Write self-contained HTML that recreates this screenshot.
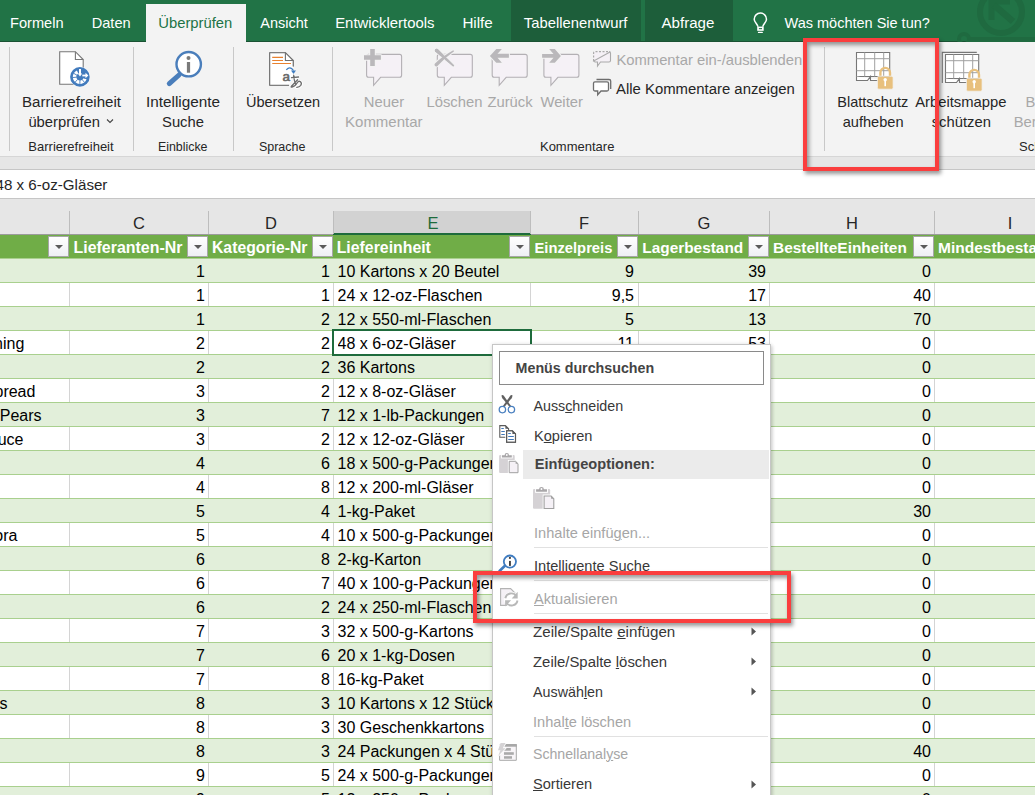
<!DOCTYPE html>
<html><head><meta charset="utf-8"><style>
html,body{margin:0;padding:0;width:1035px;height:795px;overflow:hidden;background:#fff;position:relative}
body{font-family:"Liberation Sans",sans-serif}
.r{position:absolute;box-sizing:border-box}
.t{position:absolute;white-space:nowrap;line-height:1}
u{text-decoration:underline;text-decoration-thickness:1px;text-underline-offset:1px}
.fb{position:absolute;width:21px;height:21px;box-sizing:border-box;border:1px solid #a6a6a6;background:linear-gradient(#fff,#eeeff4)}
.fb:after{content:"";position:absolute;left:6px;top:8px;border-left:4px solid transparent;border-right:4px solid transparent;border-top:4px solid #5a5a5a}
</style></head><body>
<div class="r" style="left:0px;top:0px;width:1035px;height:42px;background:#217346;"></div>
<div class="r" style="left:511px;top:0px;width:130px;height:42px;background:#1d5e3a;"></div>
<div class="r" style="left:645px;top:0px;width:88px;height:42px;background:#1d5e3a;"></div>
<div class="r" style="left:0px;top:41px;width:1035px;height:1px;background:#1a5233;"></div>
<div class="r" style="left:146px;top:4px;width:100px;height:38px;background:#f3f3f3;"></div>
<div class="t" style="left:10px;top:16.00px;font-size:14.6px;color:#fff;font-weight:400;">Formeln</div>
<div class="t" style="left:91.7px;top:16.00px;font-size:14.6px;color:#fff;font-weight:400;">Daten</div>
<div class="t" style="left:158.3px;top:16.00px;font-size:14.8px;color:#217346;font-weight:400;">Überprüfen</div>
<div class="t" style="left:260.3px;top:16.00px;font-size:14.5px;color:#fff;font-weight:400;">Ansicht</div>
<div class="t" style="left:335.2px;top:16.00px;font-size:14.9px;color:#fff;font-weight:400;">Entwicklertools</div>
<div class="t" style="left:462.4px;top:15.00px;font-size:15.2px;color:#fff;font-weight:400;">Hilfe</div>
<div class="t" style="left:523.8px;top:16.00px;font-size:14.8px;color:#fff;font-weight:400;">Tabellenentwurf</div>
<div class="t" style="left:661.5px;top:15.00px;font-size:15.1px;color:#fff;font-weight:400;">Abfrage</div>
<div class="t" style="left:784.5px;top:16.00px;font-size:14.5px;color:#fff;font-weight:400;">Was möchten Sie tun?</div>
<svg class="r" style="left:0;top:0" width="1035" height="42" viewBox="0 0 1035 42"><path d="M757.9 26.8 C757.9 24.2 754.2 22.6 754.2 19.2 A6.15 6.15 0 1 1 766.5 19.2 C766.5 22.6 762.8 24.2 762.8 26.8" fill="none" stroke="#fff" stroke-width="1.5"/><rect x="757.2" y="26.6" width="6.5" height="4.2" fill="#fff"/><rect x="758.9" y="28.1" width="3.1" height="1.1" fill="#217346"/><rect x="757.9" y="31.8" width="5" height="1.3" rx="0.6" fill="#fff"/></svg>
<svg class="r" style="left:940px;top:0px" width="95" height="42" viewBox="0 0 95 42"><circle cx="61" cy="12" r="21" fill="none" stroke="#1f6a40" stroke-width="6"/><path d="M51.5 20 V1.5 H70" fill="none" stroke="#1f6a40" stroke-width="6"/><path d="M54 5 L73 21.5" stroke="#1f6a40" stroke-width="6.5"/><circle cx="24" cy="39" r="5" fill="none" stroke="#1f6a40" stroke-width="4"/><rect x="28" y="37" width="67" height="5" fill="#1f6a40"/></svg>
<div class="r" style="left:0px;top:42px;width:1035px;height:114px;background:#f3f3f3;"></div>
<div class="r" style="left:0px;top:156px;width:1035px;height:1px;background:#d6d6d6;"></div>
<div class="r" style="left:0px;top:157px;width:1035px;height:12px;background:#e6e6e6;"></div>
<div class="r" style="left:9px;top:47px;width:1px;height:104px;background:#c8c8c8;"></div>
<div class="r" style="left:133px;top:47px;width:1px;height:104px;background:#c8c8c8;"></div>
<div class="r" style="left:233px;top:47px;width:1px;height:104px;background:#c8c8c8;"></div>
<div class="r" style="left:332px;top:47px;width:1px;height:104px;background:#c8c8c8;"></div>
<div class="r" style="left:824px;top:47px;width:1px;height:104px;background:#c8c8c8;"></div>
<div class="t" style="left:-228.5px;width:600px;text-align:center;top:94.00px;font-size:15.1px;color:#262626;font-weight:400;">Barrierefreiheit</div>
<div class="t" style="left:28.4px;top:115.00px;font-size:14.8px;color:#262626;font-weight:400;">überprüfen</div>
<svg class="r" style="left:106px;top:118px" width="8" height="6"><path d="M1 1.5 L4 4.5 L7 1.5" fill="none" stroke="#444" stroke-width="1.1"/></svg>
<div class="t" style="left:-229px;width:600px;text-align:center;top:140.00px;font-size:13px;color:#262626;font-weight:400;">Barrierefreiheit</div>
<div class="t" style="left:-117px;width:600px;text-align:center;top:94.00px;font-size:15.3px;color:#262626;font-weight:400;">Intelligente</div>
<div class="t" style="left:-117px;width:600px;text-align:center;top:115.00px;font-size:14.8px;color:#262626;font-weight:400;">Suche</div>
<div class="t" style="left:-117.30000000000001px;width:600px;text-align:center;top:141.00px;font-size:12.4px;color:#262626;font-weight:400;">Einblicke</div>
<div class="t" style="left:-17px;width:600px;text-align:center;top:95.00px;font-size:14.5px;color:#262626;font-weight:400;">Übersetzen</div>
<div class="t" style="left:-17.80000000000001px;width:600px;text-align:center;top:141.00px;font-size:12.5px;color:#262626;font-weight:400;">Sprache</div>
<div class="t" style="left:84px;width:600px;text-align:center;top:95.00px;font-size:14.8px;color:#a8a8a8;font-weight:400;">Neuer</div>
<div class="t" style="left:83.80000000000001px;width:600px;text-align:center;top:114.00px;font-size:15px;color:#a8a8a8;font-weight:400;">Kommentar</div>
<div class="t" style="left:154.5px;width:600px;text-align:center;top:95.00px;font-size:14.8px;color:#a8a8a8;font-weight:400;">Löschen</div>
<div class="t" style="left:210px;width:600px;text-align:center;top:95.00px;font-size:14.8px;color:#a8a8a8;font-weight:400;">Zurück</div>
<div class="t" style="left:261.70000000000005px;width:600px;text-align:center;top:95.00px;font-size:14.8px;color:#a8a8a8;font-weight:400;">Weiter</div>
<div class="t" style="left:277.20000000000005px;width:600px;text-align:center;top:140.00px;font-size:13px;color:#262626;font-weight:400;">Kommentare</div>
<div class="t" style="left:616.4px;top:53.00px;font-size:14.8px;color:#a8a8a8;font-weight:400;">Kommentar ein-/ausblenden</div>
<div class="t" style="left:616px;top:82.00px;font-size:14.9px;color:#262626;font-weight:400;">Alle Kommentare anzeigen</div>
<div class="t" style="left:572.8px;width:600px;text-align:center;top:95.00px;font-size:14.5px;color:#262626;font-weight:400;">Blattschutz</div>
<div class="t" style="left:573.1px;width:600px;text-align:center;top:115.00px;font-size:14.6px;color:#262626;font-weight:400;">aufheben</div>
<div class="t" style="left:660.8px;width:600px;text-align:center;top:95.00px;font-size:14.8px;color:#262626;font-weight:400;">Arbeitsmappe</div>
<div class="t" style="left:661.3px;width:600px;text-align:center;top:115.00px;font-size:14.8px;color:#262626;font-weight:400;">schützen</div>
<div class="t" style="left:1025.6px;top:95.00px;font-size:14.8px;color:#a8a8a8;font-weight:400;">Be</div>
<div class="t" style="left:1013.7px;top:115.00px;font-size:14.8px;color:#a8a8a8;font-weight:400;">Ber</div>
<div class="t" style="left:1019px;top:140.00px;font-size:13px;color:#262626;font-weight:400;">Sch</div>
<svg class="r" style="left:0;top:0" width="1035" height="200" viewBox="0 0 1035 200">
<g>
<path d="M59.7 51.7 H75.4 L83.2 59.5 V84.2 H59.7 Z" fill="#fff" stroke="#777" stroke-width="1.1"/>
<path d="M75.4 51.7 V59.5 H83.2" fill="none" stroke="#777" stroke-width="1.1"/>
<circle cx="79.9" cy="76.9" r="10.1" fill="#fff"/>
<circle cx="79.9" cy="76.9" r="9.8" fill="#427bbd"/>
<path d="M77.6 72.0 A5.4 5.4 0 1 0 85.0 78.75" fill="none" stroke="#fff" stroke-width="3.4"/>
<path d="M77.04 75.25 L73.40 73.15 M76.61 77.19 L72.43 77.55 M77.69 79.35 L74.88 82.47 M79.90 80.20 L79.90 84.40 M82.02 79.43 L84.72 82.65 M83.13 77.59 L87.24 78.46 " stroke="#427bbd" stroke-width="0.9"/>
<rect x="79" y="69" width="2" height="5.2" fill="#fff"/>
<path d="M77.8 73.6 H82.2 L80 76.4 Z" fill="#fff"/>
<rect x="82.3" y="74.6" width="3.8" height="1.8" fill="#fff"/>
<path d="M85.5 72.8 L88.4 75.5 L85.5 78.2 Z" fill="#fff"/>
</g>
<g>
<circle cx="188.7" cy="64.2" r="12.2" fill="#fff" stroke="#4a7ebb" stroke-width="2.4"/>
<path d="M179 75 L169.3 83.7" stroke="#4a7ebb" stroke-width="5" stroke-linecap="round"/>
<circle cx="188.5" cy="58" r="2" fill="#7a7a7a"/>
<rect x="186.9" y="62" width="3.2" height="10.7" fill="#7a7a7a"/>
</g>
<g>
<path d="M269.7 52.7 H285.4 L293.2 60.5 V66.5 M289 85.2 H269.7 V52.7" fill="#fff" stroke="#707070" stroke-width="1.1"/>
<path d="M269.7 52.7 H285.4 L293.2 60.5 V75 L289 85.2 H269.7 Z" fill="#fff"/>
<path d="M269.7 85.2 V52.7 H285.4 L293.2 60.5 V66.5 M289 85.2 H269.7" fill="none" stroke="#707070" stroke-width="1.1"/>
<path d="M285.4 52.7 V60.5 H293.2" fill="none" stroke="#707070" stroke-width="1.1"/>
<path d="M272.2 57.4 H283 M272.2 60.5 H283 M272.2 63.5 H291" stroke="#e8812f" stroke-width="1.1"/>
<path d="M286.3 69.8 Q290 65.5 293.5 70.5" fill="none" stroke="#3f7cc0" stroke-width="1.3"/>
<path d="M291 70.5 L293.5 74 L296 70.5 Z" fill="#3f7cc0"/>
<text x="282.6" y="81" font-family="Liberation Sans" font-size="13.5" fill="#6d6d6d" stroke="#fff" stroke-width="2" paint-order="stroke">a</text><text x="282.6" y="81" font-family="Liberation Sans" font-size="13.5" fill="#6d6d6d" stroke="#6d6d6d" stroke-width="0.5">a</text>
<g fill="none" stroke-linecap="round"><path d="M291.5 77.6 L298.6 77.0 M293.7 75.2 Q294.0 80.5 295.6 84.5 M297.6 79.7 Q293.5 84 291.6 86 Q290.4 87.3 292.0 87.0 Q295.5 86.2 297.4 82.5 Q298.6 80.6 300.2 81.6 Q302.2 83.2 300.8 85.4 Q299.4 87 296.8 87.4" stroke="#fff" stroke-width="3"/><path d="M291.5 77.6 L298.6 77.0 M293.7 75.2 Q294.0 80.5 295.6 84.5 M297.6 79.7 Q293.5 84 291.6 86 Q290.4 87.3 292.0 87.0 Q295.5 86.2 297.4 82.5 Q298.6 80.6 300.2 81.6 Q302.2 83.2 300.8 85.4 Q299.4 87 296.8 87.4" stroke="#6d6d6d" stroke-width="1.3"/></g>
</g>
</svg>
<svg class="r" style="left:0;top:0" width="1035" height="200" viewBox="0 0 1035 200"><path d="M368.6 54.4 H399.6 Q401.6 54.4 401.6 56.4 V75.3 Q401.6 77.3 399.6 77.3 H380.6 L373.6 85.3 V77.3 H368.6 Q366.6 77.3 366.6 75.3 V56.4 Q366.6 54.4 368.6 54.4 Z" fill="#f5f1f6" stroke="#b3b0b4" stroke-width="1.1"/><path d="M370.2 49.1 H374.8 V55.3 H380.9 V59.7 H374.8 V65.9 H370.2 V59.7 H364 V55.3 H370.2 Z" fill="#bab8bb" stroke="#f3f3f3" stroke-width="2" paint-order="stroke" stroke-linejoin="round"/><path d="M439.3 54.4 H470.3 Q472.3 54.4 472.3 56.4 V75.3 Q472.3 77.3 470.3 77.3 H451.3 L444.3 85.3 V77.3 H439.3 Q437.3 77.3 437.3 75.3 V56.4 Q437.3 54.4 439.3 54.4 Z" fill="#f5f1f6" stroke="#b3b0b4" stroke-width="1.1"/><path d="M437.6 49.0 L454.2 65.4 L453.2 66.4 L435.2 51.6 A1.8 1.8 0 0 1 437.6 49.0 Z" fill="#bab8bb" stroke="#f3f3f3" stroke-width="2" paint-order="stroke" stroke-linejoin="round"/><path d="M435.0 63.4 Q442 56.5 453.3 50.2 L454.1 51.2 Q445 57.5 437.2 66.2 A1.8 1.8 0 0 1 435.0 63.4 Z" fill="#bab8bb" stroke="#f3f3f3" stroke-width="2" paint-order="stroke" stroke-linejoin="round"/><path d="M437.6 49.0 L454.2 65.4 L453.2 66.4 L435.2 51.6 A1.8 1.8 0 0 1 437.6 49.0 Z" fill="#bab8bb"/><path d="M494.2 54.4 H525.2 Q527.2 54.4 527.2 56.4 V75.3 Q527.2 77.3 525.2 77.3 H506.2 L499.2 85.3 V77.3 H494.2 Q492.2 77.3 492.2 75.3 V56.4 Q492.2 54.4 494.2 54.4 Z" fill="#f5f1f6" stroke="#b3b0b4" stroke-width="1.1"/><path d="M489.9 56 L496.3 49.1 H501.9 L497.5 53.7 H508.9 V57.8 H497.5 L501.9 62.8 H496.3 Z" fill="#bab8bb" stroke="#f3f3f3" stroke-width="2" paint-order="stroke" stroke-linejoin="round"/><path d="M545.9 54.4 H576.9 Q578.9 54.4 578.9 56.4 V75.3 Q578.9 77.3 576.9 77.3 H557.9 L550.9 85.3 V77.3 H545.9 Q543.9 77.3 543.9 75.3 V56.4 Q543.9 54.4 545.9 54.4 Z" fill="#f5f1f6" stroke="#b3b0b4" stroke-width="1.1"/><path d="M542.1 54 H553.5 L549.2 49.1 H554.8 L560.9 55.9 L554.8 62.8 H549.2 L553.5 57.8 H542.1 Z" fill="#bab8bb" stroke="#f3f3f3" stroke-width="2" paint-order="stroke" stroke-linejoin="round"/>
<path d="M595 51.6 H609 Q610.5 51.6 610.5 53 V60.5 Q610.5 62 609 62 H600.5 L597.5 66 V62 H595 Q593.6 62 593.6 60.5 V53 Q593.6 51.6 595 51.6 Z" fill="#f5f1f6"/>
<path d="M593.6 61 V53 Q593.6 51.6 595 51.6 H609" fill="none" stroke="#aaa" stroke-width="1.2" stroke-dasharray="2 1.5"/>
<path d="M609 51.6 Q610.5 51.6 610.5 53 V60.5 Q610.5 62 609 62 H600.5 L597.5 66 V62 H595 L593.6 61 L610 52" fill="none" stroke="#aaa" stroke-width="1.1"/>
<path d="M596.5 79.5 H609 Q610.7 79.5 610.7 81 V89" fill="none" stroke="#6d6d6d" stroke-width="1.3"/>
<path d="M595 81.8 H607 Q608.5 81.8 608.5 83.3 V89.5 Q608.5 91 607 91 H601 L597.7 94.8 V91 H595 Q593.5 91 593.5 89.5 V83.3 Q593.5 81.8 595 81.8 Z" fill="#fff" stroke="#6d6d6d" stroke-width="1.3"/>
</svg>
<svg class="r" style="left:0;top:0" width="1035" height="200" viewBox="0 0 1035 200"><path d="M856.5 52.5 H889.7 V76.5 H856.5 Z" fill="#fff" stroke="#777" stroke-width="1.1"/><path d="M856.5 76.5 V80.5 H867.5 L870.5 76.5 L870.5 80.5 H886.7 " fill="#fff" stroke="#777" stroke-width="1.1"/><path d="M856.5 58.7 H889.7 M856.5 70.7 H889.7 M864.7 52.5 V76.5 M874.7 52.5 V76.5 M883.7 52.5 V76.5" stroke="#a0a0a0" stroke-width="1"/><path d="M880.4 76.2 V72.7 A4.8 4.8 0 0 1 890.0 72.7 V76.2" fill="none" stroke="#e8c07d" stroke-width="2.4"/><rect x="877.4" y="76.2" width="15.7" height="13" rx="1.5" fill="#e8c07d" stroke="#f3f3f3" stroke-width="0.8"/><circle cx="885.1999999999999" cy="79.8" r="1.7" fill="#fff"/><rect x="884.4" y="80.2" width="1.6" height="6" fill="#fff"/><path d="M942.3 82.9 V52.4 H976.8" fill="none" stroke="#777" stroke-width="1.1"/><path d="M945.5 54.5 H978.7 V78.5 H945.5 Z" fill="#fff" stroke="#777" stroke-width="1.1"/><path d="M945.5 78.5 V82.5 H956.5 L959.5 78.5 L959.5 82.5 H975.7 " fill="#fff" stroke="#777" stroke-width="1.1"/><path d="M945.5 60.7 H978.7 M945.5 72.7 H978.7 M953.7 54.5 V78.5 M963.7 54.5 V78.5 M972.7 54.5 V78.5" stroke="#a0a0a0" stroke-width="1"/><path d="M969.4 78.2 V74.7 A4.8 4.8 0 0 1 979.0 74.7 V78.2" fill="none" stroke="#e8c07d" stroke-width="2.4"/><rect x="966.4" y="78.2" width="15.7" height="13" rx="1.5" fill="#e8c07d" stroke="#f3f3f3" stroke-width="0.8"/><circle cx="974.1999999999999" cy="81.8" r="1.7" fill="#fff"/><rect x="973.4" y="82.2" width="1.6" height="6" fill="#fff"/></svg>
<div class="r" style="left:0px;top:169px;width:1035px;height:1px;background:#c6c6c6;"></div>
<div class="r" style="left:0px;top:170px;width:1035px;height:28px;background:#ffffff;"></div>
<div class="r" style="left:0px;top:198px;width:1035px;height:1px;background:#c6c6c6;"></div>
<div class="t" style="left:-4.5px;top:177.00px;font-size:15.15px;color:#262626;font-weight:400;">48 x 6-oz-Gläser</div>
<div class="r" style="left:0px;top:199px;width:1035px;height:36px;background:#e6e6e6;"></div>
<div class="r" style="left:333px;top:211px;width:197px;height:23px;background:#d2d2d2;"></div>
<div class="r" style="left:0px;top:234px;width:1035px;height:1px;background:#9b9b9b;"></div>
<div class="r" style="left:333px;top:233px;width:198px;height:2px;background:#1e6b3c;"></div>
<div class="r" style="left:69px;top:211px;width:1px;height:23px;background:#bdbdbd;"></div>
<div class="r" style="left:208px;top:211px;width:1px;height:23px;background:#bdbdbd;"></div>
<div class="r" style="left:333px;top:211px;width:1px;height:23px;background:#bdbdbd;"></div>
<div class="r" style="left:530px;top:211px;width:1px;height:23px;background:#bdbdbd;"></div>
<div class="r" style="left:638px;top:211px;width:1px;height:23px;background:#bdbdbd;"></div>
<div class="r" style="left:769px;top:211px;width:1px;height:23px;background:#bdbdbd;"></div>
<div class="r" style="left:934px;top:211px;width:1px;height:23px;background:#bdbdbd;"></div>
<div class="t" style="left:-161px;width:600px;text-align:center;top:215.00px;font-size:16.5px;color:#262626;font-weight:400;">C</div>
<div class="t" style="left:-29px;width:600px;text-align:center;top:215.00px;font-size:16.5px;color:#262626;font-weight:400;">D</div>
<div class="t" style="left:133px;width:600px;text-align:center;top:215.00px;font-size:16.5px;color:#1e6b3c;font-weight:400;">E</div>
<div class="t" style="left:284px;width:600px;text-align:center;top:215.00px;font-size:16.5px;color:#262626;font-weight:400;">F</div>
<div class="t" style="left:404px;width:600px;text-align:center;top:215.00px;font-size:16.5px;color:#262626;font-weight:400;">G</div>
<div class="t" style="left:552px;width:600px;text-align:center;top:215.00px;font-size:16.5px;color:#262626;font-weight:400;">H</div>
<div class="t" style="left:710px;width:600px;text-align:center;top:215.00px;font-size:16.5px;color:#262626;font-weight:400;">I</div>
<div class="r" style="left:0px;top:235px;width:1035px;height:23px;background:#70ad47;"></div>
<div class="t" style="left:73.5px;top:240.00px;font-size:15.95px;color:#fff;font-weight:700;">Lieferanten-Nr</div>
<div class="t" style="left:212px;top:240.00px;font-size:15.75px;color:#fff;font-weight:700;">Kategorie-Nr</div>
<div class="t" style="left:336.7px;top:240.00px;font-size:15.85px;color:#fff;font-weight:700;">Liefereinheit</div>
<div class="t" style="left:534.5px;top:241.00px;font-size:14.75px;color:#fff;font-weight:700;">Einzelpreis</div>
<div class="t" style="left:642.3px;top:240.00px;font-size:15.4px;color:#fff;font-weight:700;">Lagerbestand</div>
<div class="t" style="left:773px;top:240.00px;font-size:15.45px;color:#fff;font-weight:700;">BestellteEinheiten</div>
<div class="t" style="left:938px;top:240.00px;font-size:15.5px;color:#fff;font-weight:700;">Mindestbestand</div>
<div class="fb" style="left:48px;top:236px"></div>
<div class="fb" style="left:187px;top:236px"></div>
<div class="fb" style="left:312px;top:236px"></div>
<div class="fb" style="left:509px;top:236px"></div>
<div class="fb" style="left:617px;top:236px"></div>
<div class="fb" style="left:748px;top:236px"></div>
<div class="fb" style="left:913px;top:236px"></div>
<div class="r" style="left:0px;top:258px;width:1035px;height:24px;background:#e2efda;"></div>
<div class="r" style="left:0px;top:282px;width:1035px;height:24px;background:#ffffff;"></div>
<div class="r" style="left:69px;top:282px;width:1px;height:24px;background:#d4d4d4;"></div>
<div class="r" style="left:208px;top:282px;width:1px;height:24px;background:#d4d4d4;"></div>
<div class="r" style="left:333px;top:282px;width:1px;height:24px;background:#d4d4d4;"></div>
<div class="r" style="left:530px;top:282px;width:1px;height:24px;background:#d4d4d4;"></div>
<div class="r" style="left:638px;top:282px;width:1px;height:24px;background:#d4d4d4;"></div>
<div class="r" style="left:769px;top:282px;width:1px;height:24px;background:#d4d4d4;"></div>
<div class="r" style="left:934px;top:282px;width:1px;height:24px;background:#d4d4d4;"></div>
<div class="r" style="left:0px;top:306px;width:1035px;height:24px;background:#e2efda;"></div>
<div class="r" style="left:0px;top:330px;width:1035px;height:24px;background:#ffffff;"></div>
<div class="r" style="left:69px;top:330px;width:1px;height:24px;background:#d4d4d4;"></div>
<div class="r" style="left:208px;top:330px;width:1px;height:24px;background:#d4d4d4;"></div>
<div class="r" style="left:333px;top:330px;width:1px;height:24px;background:#d4d4d4;"></div>
<div class="r" style="left:530px;top:330px;width:1px;height:24px;background:#d4d4d4;"></div>
<div class="r" style="left:638px;top:330px;width:1px;height:24px;background:#d4d4d4;"></div>
<div class="r" style="left:769px;top:330px;width:1px;height:24px;background:#d4d4d4;"></div>
<div class="r" style="left:934px;top:330px;width:1px;height:24px;background:#d4d4d4;"></div>
<div class="r" style="left:0px;top:354px;width:1035px;height:24px;background:#e2efda;"></div>
<div class="r" style="left:0px;top:378px;width:1035px;height:24px;background:#ffffff;"></div>
<div class="r" style="left:69px;top:378px;width:1px;height:24px;background:#d4d4d4;"></div>
<div class="r" style="left:208px;top:378px;width:1px;height:24px;background:#d4d4d4;"></div>
<div class="r" style="left:333px;top:378px;width:1px;height:24px;background:#d4d4d4;"></div>
<div class="r" style="left:530px;top:378px;width:1px;height:24px;background:#d4d4d4;"></div>
<div class="r" style="left:638px;top:378px;width:1px;height:24px;background:#d4d4d4;"></div>
<div class="r" style="left:769px;top:378px;width:1px;height:24px;background:#d4d4d4;"></div>
<div class="r" style="left:934px;top:378px;width:1px;height:24px;background:#d4d4d4;"></div>
<div class="r" style="left:0px;top:402px;width:1035px;height:24px;background:#e2efda;"></div>
<div class="r" style="left:0px;top:426px;width:1035px;height:24px;background:#ffffff;"></div>
<div class="r" style="left:69px;top:426px;width:1px;height:24px;background:#d4d4d4;"></div>
<div class="r" style="left:208px;top:426px;width:1px;height:24px;background:#d4d4d4;"></div>
<div class="r" style="left:333px;top:426px;width:1px;height:24px;background:#d4d4d4;"></div>
<div class="r" style="left:530px;top:426px;width:1px;height:24px;background:#d4d4d4;"></div>
<div class="r" style="left:638px;top:426px;width:1px;height:24px;background:#d4d4d4;"></div>
<div class="r" style="left:769px;top:426px;width:1px;height:24px;background:#d4d4d4;"></div>
<div class="r" style="left:934px;top:426px;width:1px;height:24px;background:#d4d4d4;"></div>
<div class="r" style="left:0px;top:450px;width:1035px;height:24px;background:#e2efda;"></div>
<div class="r" style="left:0px;top:474px;width:1035px;height:24px;background:#ffffff;"></div>
<div class="r" style="left:69px;top:474px;width:1px;height:24px;background:#d4d4d4;"></div>
<div class="r" style="left:208px;top:474px;width:1px;height:24px;background:#d4d4d4;"></div>
<div class="r" style="left:333px;top:474px;width:1px;height:24px;background:#d4d4d4;"></div>
<div class="r" style="left:530px;top:474px;width:1px;height:24px;background:#d4d4d4;"></div>
<div class="r" style="left:638px;top:474px;width:1px;height:24px;background:#d4d4d4;"></div>
<div class="r" style="left:769px;top:474px;width:1px;height:24px;background:#d4d4d4;"></div>
<div class="r" style="left:934px;top:474px;width:1px;height:24px;background:#d4d4d4;"></div>
<div class="r" style="left:0px;top:498px;width:1035px;height:24px;background:#e2efda;"></div>
<div class="r" style="left:0px;top:522px;width:1035px;height:24px;background:#ffffff;"></div>
<div class="r" style="left:69px;top:522px;width:1px;height:24px;background:#d4d4d4;"></div>
<div class="r" style="left:208px;top:522px;width:1px;height:24px;background:#d4d4d4;"></div>
<div class="r" style="left:333px;top:522px;width:1px;height:24px;background:#d4d4d4;"></div>
<div class="r" style="left:530px;top:522px;width:1px;height:24px;background:#d4d4d4;"></div>
<div class="r" style="left:638px;top:522px;width:1px;height:24px;background:#d4d4d4;"></div>
<div class="r" style="left:769px;top:522px;width:1px;height:24px;background:#d4d4d4;"></div>
<div class="r" style="left:934px;top:522px;width:1px;height:24px;background:#d4d4d4;"></div>
<div class="r" style="left:0px;top:546px;width:1035px;height:24px;background:#e2efda;"></div>
<div class="r" style="left:0px;top:570px;width:1035px;height:24px;background:#ffffff;"></div>
<div class="r" style="left:69px;top:570px;width:1px;height:24px;background:#d4d4d4;"></div>
<div class="r" style="left:208px;top:570px;width:1px;height:24px;background:#d4d4d4;"></div>
<div class="r" style="left:333px;top:570px;width:1px;height:24px;background:#d4d4d4;"></div>
<div class="r" style="left:530px;top:570px;width:1px;height:24px;background:#d4d4d4;"></div>
<div class="r" style="left:638px;top:570px;width:1px;height:24px;background:#d4d4d4;"></div>
<div class="r" style="left:769px;top:570px;width:1px;height:24px;background:#d4d4d4;"></div>
<div class="r" style="left:934px;top:570px;width:1px;height:24px;background:#d4d4d4;"></div>
<div class="r" style="left:0px;top:594px;width:1035px;height:24px;background:#e2efda;"></div>
<div class="r" style="left:0px;top:618px;width:1035px;height:24px;background:#ffffff;"></div>
<div class="r" style="left:69px;top:618px;width:1px;height:24px;background:#d4d4d4;"></div>
<div class="r" style="left:208px;top:618px;width:1px;height:24px;background:#d4d4d4;"></div>
<div class="r" style="left:333px;top:618px;width:1px;height:24px;background:#d4d4d4;"></div>
<div class="r" style="left:530px;top:618px;width:1px;height:24px;background:#d4d4d4;"></div>
<div class="r" style="left:638px;top:618px;width:1px;height:24px;background:#d4d4d4;"></div>
<div class="r" style="left:769px;top:618px;width:1px;height:24px;background:#d4d4d4;"></div>
<div class="r" style="left:934px;top:618px;width:1px;height:24px;background:#d4d4d4;"></div>
<div class="r" style="left:0px;top:642px;width:1035px;height:24px;background:#e2efda;"></div>
<div class="r" style="left:0px;top:666px;width:1035px;height:24px;background:#ffffff;"></div>
<div class="r" style="left:69px;top:666px;width:1px;height:24px;background:#d4d4d4;"></div>
<div class="r" style="left:208px;top:666px;width:1px;height:24px;background:#d4d4d4;"></div>
<div class="r" style="left:333px;top:666px;width:1px;height:24px;background:#d4d4d4;"></div>
<div class="r" style="left:530px;top:666px;width:1px;height:24px;background:#d4d4d4;"></div>
<div class="r" style="left:638px;top:666px;width:1px;height:24px;background:#d4d4d4;"></div>
<div class="r" style="left:769px;top:666px;width:1px;height:24px;background:#d4d4d4;"></div>
<div class="r" style="left:934px;top:666px;width:1px;height:24px;background:#d4d4d4;"></div>
<div class="r" style="left:0px;top:690px;width:1035px;height:24px;background:#e2efda;"></div>
<div class="r" style="left:0px;top:714px;width:1035px;height:24px;background:#ffffff;"></div>
<div class="r" style="left:69px;top:714px;width:1px;height:24px;background:#d4d4d4;"></div>
<div class="r" style="left:208px;top:714px;width:1px;height:24px;background:#d4d4d4;"></div>
<div class="r" style="left:333px;top:714px;width:1px;height:24px;background:#d4d4d4;"></div>
<div class="r" style="left:530px;top:714px;width:1px;height:24px;background:#d4d4d4;"></div>
<div class="r" style="left:638px;top:714px;width:1px;height:24px;background:#d4d4d4;"></div>
<div class="r" style="left:769px;top:714px;width:1px;height:24px;background:#d4d4d4;"></div>
<div class="r" style="left:934px;top:714px;width:1px;height:24px;background:#d4d4d4;"></div>
<div class="r" style="left:0px;top:738px;width:1035px;height:24px;background:#e2efda;"></div>
<div class="r" style="left:0px;top:762px;width:1035px;height:24px;background:#ffffff;"></div>
<div class="r" style="left:69px;top:762px;width:1px;height:24px;background:#d4d4d4;"></div>
<div class="r" style="left:208px;top:762px;width:1px;height:24px;background:#d4d4d4;"></div>
<div class="r" style="left:333px;top:762px;width:1px;height:24px;background:#d4d4d4;"></div>
<div class="r" style="left:530px;top:762px;width:1px;height:24px;background:#d4d4d4;"></div>
<div class="r" style="left:638px;top:762px;width:1px;height:24px;background:#d4d4d4;"></div>
<div class="r" style="left:769px;top:762px;width:1px;height:24px;background:#d4d4d4;"></div>
<div class="r" style="left:934px;top:762px;width:1px;height:24px;background:#d4d4d4;"></div>
<div class="r" style="left:0px;top:786px;width:1035px;height:24px;background:#e2efda;"></div>
<div class="r" style="left:0px;top:258px;width:1035px;height:1px;background:#a9d08e;"></div>
<div class="r" style="left:0px;top:282px;width:1035px;height:1px;background:#a9d08e;"></div>
<div class="r" style="left:0px;top:306px;width:1035px;height:1px;background:#a9d08e;"></div>
<div class="r" style="left:0px;top:330px;width:1035px;height:1px;background:#a9d08e;"></div>
<div class="r" style="left:0px;top:354px;width:1035px;height:1px;background:#a9d08e;"></div>
<div class="r" style="left:0px;top:378px;width:1035px;height:1px;background:#a9d08e;"></div>
<div class="r" style="left:0px;top:402px;width:1035px;height:1px;background:#a9d08e;"></div>
<div class="r" style="left:0px;top:426px;width:1035px;height:1px;background:#a9d08e;"></div>
<div class="r" style="left:0px;top:450px;width:1035px;height:1px;background:#a9d08e;"></div>
<div class="r" style="left:0px;top:474px;width:1035px;height:1px;background:#a9d08e;"></div>
<div class="r" style="left:0px;top:498px;width:1035px;height:1px;background:#a9d08e;"></div>
<div class="r" style="left:0px;top:522px;width:1035px;height:1px;background:#a9d08e;"></div>
<div class="r" style="left:0px;top:546px;width:1035px;height:1px;background:#a9d08e;"></div>
<div class="r" style="left:0px;top:570px;width:1035px;height:1px;background:#a9d08e;"></div>
<div class="r" style="left:0px;top:594px;width:1035px;height:1px;background:#a9d08e;"></div>
<div class="r" style="left:0px;top:618px;width:1035px;height:1px;background:#a9d08e;"></div>
<div class="r" style="left:0px;top:642px;width:1035px;height:1px;background:#a9d08e;"></div>
<div class="r" style="left:0px;top:666px;width:1035px;height:1px;background:#a9d08e;"></div>
<div class="r" style="left:0px;top:690px;width:1035px;height:1px;background:#a9d08e;"></div>
<div class="r" style="left:0px;top:714px;width:1035px;height:1px;background:#a9d08e;"></div>
<div class="r" style="left:0px;top:738px;width:1035px;height:1px;background:#a9d08e;"></div>
<div class="r" style="left:0px;top:762px;width:1035px;height:1px;background:#a9d08e;"></div>
<div class="r" style="left:0px;top:786px;width:1035px;height:1px;background:#a9d08e;"></div>
<div class="r" style="left:0px;top:810px;width:1035px;height:1px;background:#a9d08e;"></div>
<div class="t" style="right:830px;top:264.00px;font-size:16px;color:#000;font-weight:400;">1</div>
<div class="t" style="right:705px;top:264.00px;font-size:16px;color:#000;font-weight:400;">1</div>
<div class="t" style="left:337.5px;top:264px;font-size:16px;color:#000;width:192px;overflow:hidden">10 Kartons x 20 Beutel</div>
<div class="t" style="right:401px;top:264.00px;font-size:16px;color:#000;font-weight:400;">9</div>
<div class="t" style="right:269px;top:264.00px;font-size:16px;color:#000;font-weight:400;">39</div>
<div class="t" style="right:104px;top:264.00px;font-size:16px;color:#000;font-weight:400;">0</div>
<div class="t" style="right:830px;top:288.00px;font-size:16px;color:#000;font-weight:400;">1</div>
<div class="t" style="right:705px;top:288.00px;font-size:16px;color:#000;font-weight:400;">1</div>
<div class="t" style="left:337.5px;top:288px;font-size:16px;color:#000;width:192px;overflow:hidden">24 x 12-oz-Flaschen</div>
<div class="t" style="right:401px;top:288.00px;font-size:16px;color:#000;font-weight:400;">9,5</div>
<div class="t" style="right:269px;top:288.00px;font-size:16px;color:#000;font-weight:400;">17</div>
<div class="t" style="right:104px;top:288.00px;font-size:16px;color:#000;font-weight:400;">40</div>
<div class="t" style="right:830px;top:312.00px;font-size:16px;color:#000;font-weight:400;">1</div>
<div class="t" style="right:705px;top:312.00px;font-size:16px;color:#000;font-weight:400;">2</div>
<div class="t" style="left:337.5px;top:312px;font-size:16px;color:#000;width:192px;overflow:hidden">12 x 550-ml-Flaschen</div>
<div class="t" style="right:401px;top:312.00px;font-size:16px;color:#000;font-weight:400;">5</div>
<div class="t" style="right:269px;top:312.00px;font-size:16px;color:#000;font-weight:400;">13</div>
<div class="t" style="right:104px;top:312.00px;font-size:16px;color:#000;font-weight:400;">70</div>
<div class="t" style="right:1010.7px;top:336.00px;font-size:16px;color:#000;font-weight:400;">ning</div>
<div class="t" style="right:830px;top:336.00px;font-size:16px;color:#000;font-weight:400;">2</div>
<div class="t" style="right:705px;top:336.00px;font-size:16px;color:#000;font-weight:400;">2</div>
<div class="t" style="left:337.5px;top:336px;font-size:16px;color:#000;width:192px;overflow:hidden">48 x 6-oz-Gläser</div>
<div class="t" style="right:401px;top:336.00px;font-size:16px;color:#000;font-weight:400;">11</div>
<div class="t" style="right:269px;top:336.00px;font-size:16px;color:#000;font-weight:400;">53</div>
<div class="t" style="right:104px;top:336.00px;font-size:16px;color:#000;font-weight:400;">0</div>
<div class="t" style="right:830px;top:360.00px;font-size:16px;color:#000;font-weight:400;">2</div>
<div class="t" style="right:705px;top:360.00px;font-size:16px;color:#000;font-weight:400;">2</div>
<div class="t" style="left:337.5px;top:360px;font-size:16px;color:#000;width:192px;overflow:hidden">36 Kartons</div>
<div class="t" style="right:104px;top:360.00px;font-size:16px;color:#000;font-weight:400;">0</div>
<div class="t" style="right:999.6px;top:384.00px;font-size:16px;color:#000;font-weight:400;">pread</div>
<div class="t" style="right:830px;top:384.00px;font-size:16px;color:#000;font-weight:400;">3</div>
<div class="t" style="right:705px;top:384.00px;font-size:16px;color:#000;font-weight:400;">2</div>
<div class="t" style="left:337.5px;top:384px;font-size:16px;color:#000;width:192px;overflow:hidden">12 x 8-oz-Gläser</div>
<div class="t" style="right:104px;top:384.00px;font-size:16px;color:#000;font-weight:400;">0</div>
<div class="t" style="right:993.5px;top:408.00px;font-size:16px;color:#000;font-weight:400;">Pears</div>
<div class="t" style="right:830px;top:408.00px;font-size:16px;color:#000;font-weight:400;">3</div>
<div class="t" style="right:705px;top:408.00px;font-size:16px;color:#000;font-weight:400;">7</div>
<div class="t" style="left:337.5px;top:408px;font-size:16px;color:#000;width:192px;overflow:hidden">12 x 1-lb-Packungen</div>
<div class="t" style="right:104px;top:408.00px;font-size:16px;color:#000;font-weight:400;">0</div>
<div class="t" style="right:1011.5px;top:432.00px;font-size:16px;color:#000;font-weight:400;">uce</div>
<div class="t" style="right:830px;top:432.00px;font-size:16px;color:#000;font-weight:400;">3</div>
<div class="t" style="right:705px;top:432.00px;font-size:16px;color:#000;font-weight:400;">2</div>
<div class="t" style="left:337.5px;top:432px;font-size:16px;color:#000;width:192px;overflow:hidden">12 x 12-oz-Gläser</div>
<div class="t" style="right:104px;top:432.00px;font-size:16px;color:#000;font-weight:400;">0</div>
<div class="t" style="right:830px;top:456.00px;font-size:16px;color:#000;font-weight:400;">4</div>
<div class="t" style="right:705px;top:456.00px;font-size:16px;color:#000;font-weight:400;">6</div>
<div class="t" style="left:337.5px;top:456px;font-size:16px;color:#000;width:192px;overflow:hidden">18 x 500-g-Packungen</div>
<div class="t" style="right:104px;top:456.00px;font-size:16px;color:#000;font-weight:400;">0</div>
<div class="t" style="right:830px;top:480.00px;font-size:16px;color:#000;font-weight:400;">4</div>
<div class="t" style="right:705px;top:480.00px;font-size:16px;color:#000;font-weight:400;">8</div>
<div class="t" style="left:337.5px;top:480px;font-size:16px;color:#000;width:192px;overflow:hidden">12 x 200-ml-Gläser</div>
<div class="t" style="right:104px;top:480.00px;font-size:16px;color:#000;font-weight:400;">0</div>
<div class="t" style="right:830px;top:504.00px;font-size:16px;color:#000;font-weight:400;">5</div>
<div class="t" style="right:705px;top:504.00px;font-size:16px;color:#000;font-weight:400;">4</div>
<div class="t" style="left:337.5px;top:504px;font-size:16px;color:#000;width:192px;overflow:hidden">1-kg-Paket</div>
<div class="t" style="right:104px;top:504.00px;font-size:16px;color:#000;font-weight:400;">30</div>
<div class="t" style="right:1017.6px;top:528.00px;font-size:16px;color:#000;font-weight:400;">ora</div>
<div class="t" style="right:830px;top:528.00px;font-size:16px;color:#000;font-weight:400;">5</div>
<div class="t" style="right:705px;top:528.00px;font-size:16px;color:#000;font-weight:400;">4</div>
<div class="t" style="left:337.5px;top:528px;font-size:16px;color:#000;width:192px;overflow:hidden">10 x 500-g-Packungen</div>
<div class="t" style="right:104px;top:528.00px;font-size:16px;color:#000;font-weight:400;">0</div>
<div class="t" style="right:830px;top:552.00px;font-size:16px;color:#000;font-weight:400;">6</div>
<div class="t" style="right:705px;top:552.00px;font-size:16px;color:#000;font-weight:400;">8</div>
<div class="t" style="left:337.5px;top:552px;font-size:16px;color:#000;width:192px;overflow:hidden">2-kg-Karton</div>
<div class="t" style="right:104px;top:552.00px;font-size:16px;color:#000;font-weight:400;">0</div>
<div class="t" style="right:830px;top:576.00px;font-size:16px;color:#000;font-weight:400;">6</div>
<div class="t" style="right:705px;top:576.00px;font-size:16px;color:#000;font-weight:400;">7</div>
<div class="t" style="left:337.5px;top:576px;font-size:16px;color:#000;width:192px;overflow:hidden">40 x 100-g-Packungen</div>
<div class="t" style="right:104px;top:576.00px;font-size:16px;color:#000;font-weight:400;">0</div>
<div class="t" style="right:830px;top:600.00px;font-size:16px;color:#000;font-weight:400;">6</div>
<div class="t" style="right:705px;top:600.00px;font-size:16px;color:#000;font-weight:400;">2</div>
<div class="t" style="left:337.5px;top:600px;font-size:16px;color:#000;width:192px;overflow:hidden">24 x 250-ml-Flaschen</div>
<div class="t" style="right:104px;top:600.00px;font-size:16px;color:#000;font-weight:400;">0</div>
<div class="t" style="right:830px;top:624.00px;font-size:16px;color:#000;font-weight:400;">7</div>
<div class="t" style="right:705px;top:624.00px;font-size:16px;color:#000;font-weight:400;">3</div>
<div class="t" style="left:337.5px;top:624px;font-size:16px;color:#000;width:192px;overflow:hidden">32 x 500-g-Kartons</div>
<div class="t" style="right:104px;top:624.00px;font-size:16px;color:#000;font-weight:400;">0</div>
<div class="t" style="right:830px;top:648.00px;font-size:16px;color:#000;font-weight:400;">7</div>
<div class="t" style="right:705px;top:648.00px;font-size:16px;color:#000;font-weight:400;">6</div>
<div class="t" style="left:337.5px;top:648px;font-size:16px;color:#000;width:192px;overflow:hidden">20 x 1-kg-Dosen</div>
<div class="t" style="right:104px;top:648.00px;font-size:16px;color:#000;font-weight:400;">0</div>
<div class="t" style="right:830px;top:672.00px;font-size:16px;color:#000;font-weight:400;">7</div>
<div class="t" style="right:705px;top:672.00px;font-size:16px;color:#000;font-weight:400;">8</div>
<div class="t" style="left:337.5px;top:672px;font-size:16px;color:#000;width:192px;overflow:hidden">16-kg-Paket</div>
<div class="t" style="right:104px;top:672.00px;font-size:16px;color:#000;font-weight:400;">0</div>
<div class="t" style="right:1027.5px;top:696.00px;font-size:16px;color:#000;font-weight:400;">s</div>
<div class="t" style="right:830px;top:696.00px;font-size:16px;color:#000;font-weight:400;">8</div>
<div class="t" style="right:705px;top:696.00px;font-size:16px;color:#000;font-weight:400;">3</div>
<div class="t" style="left:337.5px;top:696px;font-size:16px;color:#000;width:192px;overflow:hidden">10 Kartons x 12 Stück</div>
<div class="t" style="right:104px;top:696.00px;font-size:16px;color:#000;font-weight:400;">0</div>
<div class="t" style="right:830px;top:720.00px;font-size:16px;color:#000;font-weight:400;">8</div>
<div class="t" style="right:705px;top:720.00px;font-size:16px;color:#000;font-weight:400;">3</div>
<div class="t" style="left:337.5px;top:720px;font-size:16px;color:#000;width:192px;overflow:hidden">30 Geschenkkartons</div>
<div class="t" style="right:104px;top:720.00px;font-size:16px;color:#000;font-weight:400;">0</div>
<div class="t" style="right:830px;top:744.00px;font-size:16px;color:#000;font-weight:400;">8</div>
<div class="t" style="right:705px;top:744.00px;font-size:16px;color:#000;font-weight:400;">3</div>
<div class="t" style="left:337.5px;top:744px;font-size:16px;color:#000;width:192px;overflow:hidden">24 Packungen x 4 Stück</div>
<div class="t" style="right:104px;top:744.00px;font-size:16px;color:#000;font-weight:400;">40</div>
<div class="t" style="right:830px;top:768.00px;font-size:16px;color:#000;font-weight:400;">9</div>
<div class="t" style="right:705px;top:768.00px;font-size:16px;color:#000;font-weight:400;">5</div>
<div class="t" style="left:337.5px;top:768px;font-size:16px;color:#000;width:192px;overflow:hidden">24 x 500-g-Packungen</div>
<div class="t" style="right:104px;top:768.00px;font-size:16px;color:#000;font-weight:400;">0</div>
<div class="t" style="right:830px;top:792.00px;font-size:16px;color:#000;font-weight:400;">9</div>
<div class="t" style="right:705px;top:792.00px;font-size:16px;color:#000;font-weight:400;">5</div>
<div class="t" style="left:337.5px;top:792px;font-size:16px;color:#000;width:192px;overflow:hidden">12 x 250-g-Packungen</div>
<div class="t" style="right:104px;top:792.00px;font-size:16px;color:#000;font-weight:400;">0</div>
<div class="r" style="left:332px;top:329px;width:200px;height:27px;border:2px solid #1e6b3c"></div>
<div class="r" style="left:492px;top:344px;width:279px;height:460px;background:#fff;border:1px solid #c6c6c6;box-shadow:0 0 4px rgba(0,0,0,0.12), 2px 2px 3px rgba(0,0,0,0.12)"></div>
<div class="r" style="left:499px;top:351px;width:265px;height:34px;background:#fff;border:1px solid #8a8a8a"></div>
<div class="t" style="left:515.6px;top:361.00px;font-size:14.25px;color:#444;font-weight:700;">Menüs durchsuchen</div>
<div class="t" style="left:533.4px;top:399.00px;font-size:14.3px;color:#383838;font-weight:400;">Auss<u>c</u>hneiden</div>
<div class="t" style="left:534px;top:429.00px;font-size:14.6px;color:#383838;font-weight:400;">K<u>o</u>pieren</div>
<div class="r" style="left:523px;top:450px;width:246px;height:29px;background:#ebebeb;"></div>
<div class="t" style="left:534.8px;top:457.00px;font-size:14.6px;color:#444;font-weight:700;">Einfügeoptionen:</div>
<div class="t" style="left:534px;top:526.00px;font-size:14.6px;color:#a6a6a6;font-weight:400;">Inhalte einfü<u>g</u>en...</div>
<div class="r" style="left:534px;top:547px;width:234px;height:1px;background:#e1e1e1;"></div>
<div class="t" style="left:534px;top:559.00px;font-size:14.6px;color:#383838;font-weight:400;">Intell<u>i</u>gente Suche</div>
<div class="r" style="left:534px;top:580px;width:234px;height:1px;background:#e1e1e1;"></div>
<div class="t" style="left:534px;top:592.00px;font-size:14.6px;color:#a6a6a6;font-weight:400;"><u>A</u>ktualisieren</div>
<div class="r" style="left:534px;top:613px;width:234px;height:1px;background:#e1e1e1;"></div>
<div class="t" style="left:533px;top:624.00px;font-size:15.15px;color:#383838;font-weight:400;">Zeile/Spalte <u>e</u>infügen</div>
<div class="t" style="left:533px;top:655.00px;font-size:14.9px;color:#383838;font-weight:400;">Zeile/Spalte <u>l</u>öschen</div>
<div class="t" style="left:533px;top:685.00px;font-size:14.3px;color:#383838;font-weight:400;">Auswäh<u>l</u>en</div>
<div class="t" style="left:533px;top:715.00px;font-size:14.6px;color:#a6a6a6;font-weight:400;">Inhal<u>t</u>e löschen</div>
<div class="r" style="left:534px;top:736px;width:234px;height:1px;background:#e1e1e1;"></div>
<div class="t" style="left:533px;top:747.00px;font-size:14.15px;color:#a6a6a6;font-weight:400;">Schnellanal<u>y</u>se</div>
<div class="t" style="left:533px;top:777.00px;font-size:14.6px;color:#383838;font-weight:400;"><u>S</u>ortieren</div>
<svg class="r" style="left:751px;top:627px" width="6" height="9"><path d="M0.5 0.5 L5 4.5 L0.5 8.5 Z" fill="#555"/></svg>
<svg class="r" style="left:751px;top:657px" width="6" height="9"><path d="M0.5 0.5 L5 4.5 L0.5 8.5 Z" fill="#555"/></svg>
<svg class="r" style="left:751px;top:687px" width="6" height="9"><path d="M0.5 0.5 L5 4.5 L0.5 8.5 Z" fill="#555"/></svg>
<svg class="r" style="left:751px;top:780px" width="6" height="9"><path d="M0.5 0.5 L5 4.5 L0.5 8.5 Z" fill="#555"/></svg>
<svg class="r" style="left:0;top:0" width="1035" height="795" viewBox="0 0 1035 795">
<path d="M501.6 395.2 Q502.8 394.6 503.6 395.6 L511.3 406.3 L509.6 406.9 L502.4 398.2 Q501.4 396.8 501.6 395.2 Z" fill="#606060"/><path d="M512.4 395.2 Q511.2 394.6 510.4 395.6 L502.7 406.3 L504.4 406.9 L511.6 398.2 Q512.6 396.8 512.4 395.2 Z" fill="#606060"/>
<circle cx="502.4" cy="409.6" r="3.2" fill="none" stroke="#4a80c0" stroke-width="1.3"/>
<circle cx="511.4" cy="409.6" r="3.2" fill="none" stroke="#4a80c0" stroke-width="1.3"/>
<path d="M499.8 425.6 H505.4 L508.6 428.8 V437.2 H499.8 Z" fill="#fff" stroke="#5a5a5a" stroke-width="1.1" stroke-linejoin="miter"/>
<path d="M505.4 425.6 V428.8 H508.6 Z" fill="#5a5a5a"/>
<path d="M501.3 428.5 H503.8 M501.3 431.5 H504.8 M501.3 434.5 H504.8" stroke="#3f76b8" stroke-width="1.1"/>
<path d="M506.6 430.8 H512.4 L515.5 433.9 V442.3 H506.6 Z" fill="#fff" stroke="#5a5a5a" stroke-width="1.1"/>
<rect x="505.2" y="429.3" width="1" height="8.6" fill="#fff"/>
<path d="M506.6 430.8 H512.4 L515.5 433.9 V442.3 H506.6 Z" fill="none" stroke="#5a5a5a" stroke-width="1.1"/>
<path d="M512.4 430.8 V433.9 H515.5 Z" fill="#5a5a5a"/>
<path d="M508.2 433.5 H510.8 M508.2 436.5 H513.8 M508.2 439.5 H513.8" stroke="#3f76b8" stroke-width="1.1"/>
<g id="clip1">
<rect x="499.1" y="455" width="15.6" height="17.9" rx="1" fill="#d5d2d5"/>
<rect x="501" y="454.6" width="11.7" height="3.8" fill="#fff"/>
<path d="M501.9 455.2 H504.6 A2.2 2.2 0 0 1 509 455.2 H511.8 V457.4 H501.9 Z" fill="#a9a7a9"/>
<circle cx="506.8" cy="455" r="0.9" fill="#fff"/>
<path d="M509.2 461.3 H515.6 L518 463.7 V472.7 H509.2 Z" fill="#f5f1f6" stroke="#fff" stroke-width="2.6"/>
<path d="M509.2 461.3 H515.6 L518 463.7 V472.7 H509.2 Z" fill="#f5f1f6" stroke="#a0a0a0" stroke-width="1"/>
<path d="M515.6 461.3 V463.7 H518 Z" fill="#a0a0a0"/>
</g>
<use href="#clip1" transform="translate(533 487) scale(1.1) translate(-499.1 -453.1)"/>
<circle cx="509.9" cy="561.6" r="6.1" fill="#fff" stroke="#3f7cc0" stroke-width="1.8"/>
<path d="M504.7 566 L499.5 571" stroke="#3f7cc0" stroke-width="2.6" stroke-linecap="round"/>
<circle cx="509.9" cy="557.9" r="1.1" fill="#404040"/>
<rect x="509" y="560.9" width="1.9" height="5" fill="#404040"/>
<path d="M500.6 588.6 H510.6 L514.8 592.8 V605.4 H500.6 Z" fill="#f5f1f6" stroke="#b3b3b3" stroke-width="1.1"/>
<circle cx="511.4" cy="599.4" r="7.6" fill="#fff"/>
<path d="M505.3 598.3 A6.1 6.1 0 0 1 516.4 596.2" fill="none" stroke="#b8b8b8" stroke-width="1.9"/>
<path d="M517.7 591.8 V598.6 H511.7 Z" fill="#b8b8b8"/>
<path d="M517.5 600.5 A6.1 6.1 0 0 1 506.4 602.7" fill="none" stroke="#b8b8b8" stroke-width="1.9"/>
<path d="M505.1 600.3 H511.1 L505.1 606.5 Z" fill="#b8b8b8"/>
<path d="M499.6 744.6 H516.3 V760.3 H499.6 Z" fill="#f8f5f8" stroke="#a8a8a8" stroke-width="1"/>
<rect x="499.1" y="744.1" width="17.7" height="2.6" fill="#a8a8a8"/>
<rect x="504" y="748" width="6.8" height="2.7" fill="#aaa"/>
<rect x="504" y="752.2" width="9.8" height="2.6" fill="#aaa"/>
<rect x="504" y="756.2" width="8" height="2.5" fill="#aaa"/>
<path d="M500.6 743.1 H505.5 L502.8 748.2 H505.6 L498.2 756 L500.4 750.2 H498 Z" fill="#d5d3d5" stroke="#fff" stroke-width="1.6" paint-order="stroke" stroke-linejoin="round"/>
</svg>
<div class="r" style="left:803px;top:38px;width:136px;height:133px;border:4px solid #fa3e3e;box-shadow:2px 3px 4px rgba(0,0,0,0.4), inset 2px 3px 4px rgba(0,0,0,0.4)"></div>
<div class="r" style="left:473px;top:571px;width:318px;height:52px;border:4px solid #fa3e3e;box-shadow:2px 3px 4px rgba(0,0,0,0.4), inset 2px 3px 4px rgba(0,0,0,0.4)"></div>
</body></html>
